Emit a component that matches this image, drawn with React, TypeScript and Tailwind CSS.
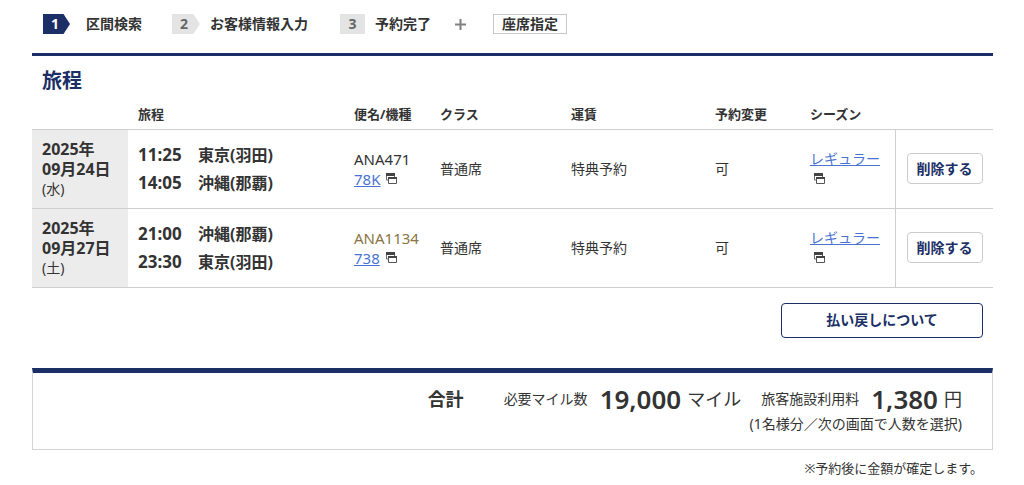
import React from 'react'

type Flight = {
  date: string[]
  day: string
  stops: { time: string; place: string }[]
  flightNo: string
  flightColor: string
  aircraft: string
}

const flights: Flight[] = [
  {
    date: ['2025年', '09月24日'],
    day: '(水)',
    stops: [
      { time: '11:25', place: '東京(羽田)' },
      { time: '14:05', place: '沖縄(那覇)' },
    ],
    flightNo: 'ANA471',
    flightColor: 'text-[#333333]',
    aircraft: '78K',
  },
  {
    date: ['2025年', '09月27日'],
    day: '(土)',
    stops: [
      { time: '21:00', place: '沖縄(那覇)' },
      { time: '23:30', place: '東京(羽田)' },
    ],
    flightNo: 'ANA1134',
    flightColor: 'text-[#8a7346]',
    aircraft: '738',
  },
]

function WindowIcon({ className = '' }: { className?: string }) {
  return (
    <svg className={className} width="11" height="11" viewBox="0 0 11 11" aria-hidden="true">
      <path d="M0 0h9v3H0z" fill="#444444" />
      <path d="M0.5 3v4H2M8.5 3v1" fill="none" stroke="#666666" />
      <path d="M2 4h9v2.5H2z" fill="#444444" />
      <path d="M2.5 6v4.5h8V6" fill="#ffffff" stroke="#555555" />
      <path d="M2 4h9v2H2z" fill="#444444" />
    </svg>
  )
}

function Steps() {
  return (
    <ol className="flex items-center pl-[11px] pt-3.5 text-sm/5 font-bold">
      <li className="flex items-center gap-4">
        <span className="flex h-5 w-[27px] items-center bg-[#1b2f66] pl-2 text-white [clip-path:polygon(0_0,76%_0,100%_50%,76%_100%,0_100%)]">
          1
        </span>
        区間検索
      </li>
      <li className="ml-[30px] flex items-center gap-2.5">
        <span className="flex h-5 w-7 items-center bg-[#e4e4e4] pl-2 text-[#666666] [clip-path:polygon(0_0,76%_0,100%_50%,76%_100%,0_100%)]">
          2
        </span>
        お客様情報入力
      </li>
      <li className="ml-8 flex items-center gap-2.5">
        <span className="flex h-5 w-[25px] items-center justify-center bg-[#e4e4e4] text-[#666666]">3</span>
        予約完了
      </li>
      <li className="ml-6 flex items-center gap-[27px]">
        <svg width="11" height="11" viewBox="0 0 11 11" aria-hidden="true">
          <path d="M5.5 0v11M0 5.5h11" stroke="#808080" strokeWidth="2" />
        </svg>
        <span className="border border-[#c8c8c8] px-2 leading-[18px]">座席指定</span>
      </li>
    </ol>
  )
}

function FlightRow({ flight }: { flight: Flight }) {
  return (
    <tr className="h-[79px] border-y border-[#cfcfcf]">
      <th scope="row" className="bg-[#ececec] pl-2.5 text-left text-base/5">
        {flight.date.map((d) => (
          <div key={d}>{d}</div>
        ))}
        <div className="text-sm/5 font-normal">{flight.day}</div>
      </th>
      <td className="pl-2.5 font-bold">
        {flight.stops.map((s) => (
          <div key={s.time} className="flex items-baseline">
            <span className="w-[60px] text-[17px]/7">{s.time}</span>
            <span className="text-base/7">{s.place}</span>
          </div>
        ))}
      </td>
      <td className="pl-2.5 text-[15px]/5">
        <div className={flight.flightColor}>{flight.flightNo}</div>
        <div className="flex items-center gap-1.5">
          <a href="#aircraft" className="text-[#4a73d1] underline">{flight.aircraft}</a>
          <WindowIcon />
        </div>
      </td>
      <td className="pl-2.5">普通席</td>
      <td className="pl-2.5">特典予約</td>
      <td className="pl-2.5">可</td>
      <td className="border-r border-[#cfcfcf] pl-2.5">
        <a href="#season" className="block whitespace-nowrap text-[#4a73d1] underline">レギュラー</a>
        <WindowIcon className="my-1 ml-1" />
      </td>
      <td className="pl-[11px]">
        <button type="button" className="h-[31px] w-[76px] rounded border border-[#cccccc] bg-white font-bold text-[#1b2f66]">
          削除する
        </button>
      </td>
    </tr>
  )
}

export default function App() {
  return (
    <main className="bg-white pl-8 pr-[31px] font-['Noto_Sans','Noto_Sans_CJK_JP',sans-serif] text-sm/5 text-[#333333]">
      <Steps />
      <section className="mt-[19px] border-t-3 border-[#1b2f66]">
        <h2 className="pl-2.5 pt-[11px] text-xl/7 font-bold text-[#1b2f66]">旅程</h2>
        <table className="mt-1 w-full table-fixed border-collapse">
          <colgroup>
            <col className="w-24" />
            <col />
            <col className="w-[86px]" />
            <col className="w-[131px]" />
            <col className="w-36" />
            <col className="w-[95px]" />
            <col className="w-[95px]" />
            <col className="w-[98px]" />
          </colgroup>
          <thead>
            <tr className="h-[30px] text-left text-[13px]/5">
              <td></td>
              <th scope="col" className="pl-2.5">旅程</th>
              <th scope="col" className="whitespace-nowrap pl-2.5">便名/機種</th>
              <th scope="col" className="pl-2.5">クラス</th>
              <th scope="col" className="pl-2.5">運賃</th>
              <th scope="col" className="pl-2.5">予約変更</th>
              <th scope="col" className="pl-2.5">シーズン</th>
              <td></td>
            </tr>
          </thead>
          <tbody>
            {flights.map((f) => (
              <FlightRow key={f.flightNo} flight={f} />
            ))}
          </tbody>
        </table>
        <div className="flex justify-end pr-2.5 pt-[15px]">
          <button type="button" className="h-[35px] w-[202px] rounded border border-[#1b2f66] bg-white font-bold text-[#1b2f66]">
            払い戻しについて
          </button>
        </div>
      </section>
      <section className="mt-[30px] border border-t-5 border-[#d4d4d4] border-t-[#1b2f66] pb-3.5 pr-[30px] pt-3">
        <div className="flex items-center justify-end leading-7">
          <h3 className="mr-10 text-lg/7 font-bold">合計</h3>
          <span>必要マイル数</span>
          <strong className="ml-3 text-[26px]/7 font-semibold">19,000</strong>
          <span className="ml-1.5 text-lg/7">マイル</span>
          <span className="ml-5">旅客施設利用料</span>
          <strong className="ml-3 text-[26px]/7 font-semibold">1,380</strong>
          <span className="ml-1.5 text-lg/7">円</span>
        </div>
        <p className="text-right leading-[22px]">(1名様分／次の画面で人数を選択)</p>
      </section>
      <p className="mt-2 pr-2.5 text-right text-[13px]/5">※予約後に金額が確定します。</p>
    </main>
  )
}
